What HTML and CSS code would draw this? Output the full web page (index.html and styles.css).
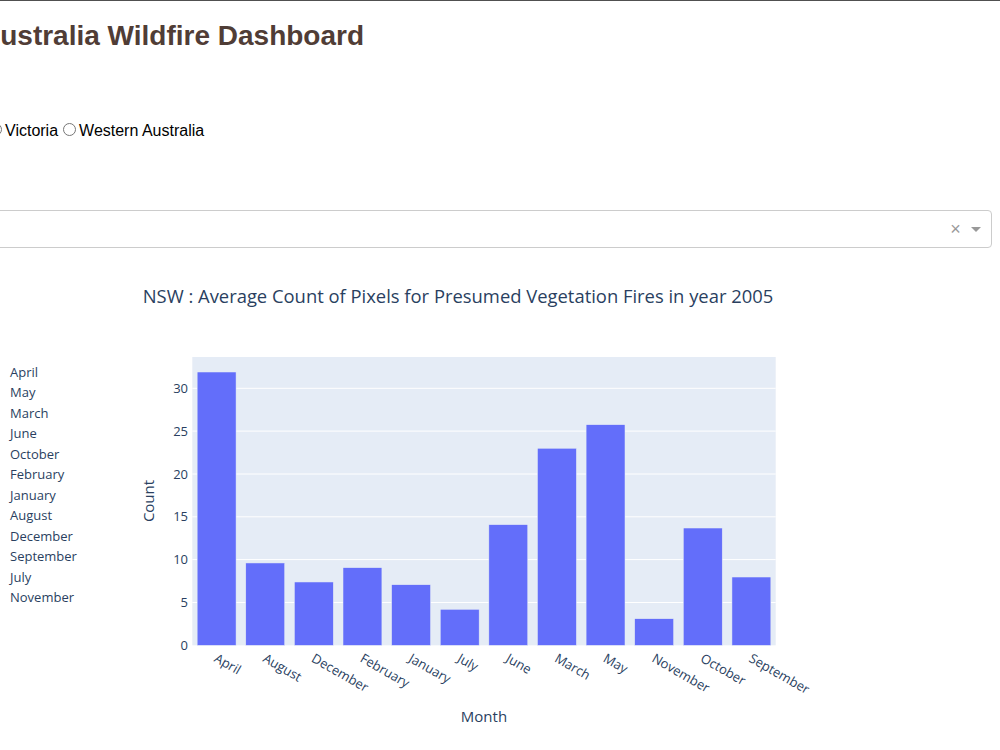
FILE: index.html
```html
<!DOCTYPE html>
<html lang="en">
<head>
    <meta charset="UTF-8">
    <meta name="viewport" content="width=device-width, initial-scale=1.0">
    <title>Australia Wildfire Dashboard</title>
    <link rel="stylesheet" href="styles.css">
</head>
<body>
    <div class="page">
        <h1 class="title">Australia Wildfire Dashboard</h1>

        <div class="region-row">
            <label class="radio-item"><input type="radio" name="region" value="VI">Victoria</label><label class="radio-item"><input type="radio" name="region" value="WA">Western Australia</label>
        </div>

        <div class="select-control">
            <div class="select-value"></div>
            <span class="select-clear">&times;</span>
            <span class="select-arrow-zone"><span class="select-arrow"></span></span>
        </div>

        <div class="plots">
            <ul class="pie-legend">
                <li>April</li>
                <li>May</li>
                <li>March</li>
                <li>June</li>
                <li>October</li>
                <li>February</li>
                <li>January</li>
                <li>August</li>
                <li>December</li>
                <li>September</li>
                <li>July</li>
                <li>November</li>
            </ul>

            <svg class="bar-chart" width="870" height="503" viewBox="130 247 870 503">
                <text class="chart-title" x="458" y="302" text-anchor="middle">NSW : Average Count of Pixels for Presumed Vegetation Fires in year 2005</text>

                <rect x="192.3" y="356" width="583.4" height="288.3" fill="#e5ecf6"/>
                <g stroke="#fff" stroke-width="1">
                    <line x1="192.3" x2="775.7" y1="601.5" y2="601.5"/>
                    <line x1="192.3" x2="775.7" y1="558.6" y2="558.6"/>
                    <line x1="192.3" x2="775.7" y1="515.8" y2="515.8"/>
                    <line x1="192.3" x2="775.7" y1="473" y2="473"/>
                    <line x1="192.3" x2="775.7" y1="430.1" y2="430.1"/>
                    <line x1="192.3" x2="775.7" y1="387.3" y2="387.3"/>
                </g>

                <g id="bars" fill="#636efa" stroke="#e5ecf6" stroke-width="0.5"></g>

                <g class="tick" text-anchor="end">
                    <text x="188" y="648.8">0</text>
                    <text x="188" y="606">5</text>
                    <text x="188" y="563.1">10</text>
                    <text x="188" y="520.3">15</text>
                    <text x="188" y="477.5">20</text>
                    <text x="188" y="434.6">25</text>
                    <text x="188" y="391.8">30</text>
                </g>

                <g id="xticks" class="tick"></g>

                <text class="axis-title" transform="translate(154,500) rotate(-90)" text-anchor="middle">Count</text>
                <text class="axis-title" x="484" y="721" text-anchor="middle">Month</text>
            </svg>
        </div>
    </div>

    <script>
        const data = [
            ['April', 31.9], ['August', 9.61], ['December', 7.39], ['February', 9.06],
            ['January', 7.07], ['July', 4.2], ['June', 14.08], ['March', 23.0],
            ['May', 25.75], ['November', 3.1], ['October', 13.69], ['September', 7.97]
        ];
        const ns = 'http://www.w3.org/2000/svg';
        const left = 192.3, base = 644.3, perUnit = 8.567;
        const step = 583.4 / data.length;
        const bars = document.getElementById('bars');
        const xticks = document.getElementById('xticks');

        data.forEach(([month, value], i) => {
            const h = value * perUnit;
            const rect = document.createElementNS(ns, 'rect');
            rect.setAttribute('x', left + step * i + step * 0.1);
            rect.setAttribute('y', base - h);
            rect.setAttribute('width', step * 0.8);
            rect.setAttribute('height', h);
            bars.appendChild(rect);

            const cx = left + step * (i + 0.5);
            const label = document.createElementNS(ns, 'text');
            label.setAttribute('transform', `translate(${cx - 1},656) rotate(30)`);
            label.setAttribute('dy', '0.35em');
            label.textContent = month;
            xticks.appendChild(label);
        });
    </script>
</body>
</html>
```

FILE: styles.css
```css
html, body {
    margin: 0;
    padding: 0;
}
body {
    border-top: 1px solid #505050;
    background-color: #fff;
    font-family: Arial, "Liberation Sans", sans-serif;
    overflow: hidden;
}
.page {
    width: 1000px;
    height: 749px;
    overflow: hidden;
}
.title {
    margin: 0.67em 0 0 -20px;
    font-size: 28px;
    font-weight: bold;
    color: #503D36;
}
.region-row {
    margin-top: 68px;
    margin-left: -16px;
    font-size: 16px;
    color: #000;
}
.radio-item {
    display: inline-block;
}
.radio-item input {
    margin: 3px 3px 0 5px;
}
.select-control {
    display: flex;
    align-items: center;
    height: 36px;
    margin: 70px 8px 0 -20px;
    border: 1px solid #ccc;
    border-radius: 4px;
    background-color: #fff;
}
.select-value {
    flex: 1;
}
.select-clear {
    width: 17px;
    padding-right: 2px;
    text-align: center;
    font-size: 18px;
    line-height: 1;
    color: #999;
}
.select-arrow-zone {
    display: flex;
    justify-content: center;
    width: 20px;
    padding-right: 5px;
}
.select-arrow {
    width: 0;
    height: 0;
    border-style: solid;
    border-width: 5px 5px 2.5px;
    border-color: #999 transparent transparent;
    margin-top: 3px;
}
.plots {
    display: flex;
}
.pie-legend {
    width: 120px;
    margin: 0;
    padding: 114px 0 0 10px;
    list-style: none;
    font-family: "Open Sans", verdana, arial, sans-serif;
    font-size: 13px;
    line-height: 20.5px;
    color: #2a3f5f;
}
.bar-chart {
    display: block;
    font-family: "Open Sans", verdana, arial, sans-serif;
    fill: #2a3f5f;
}
.chart-title {
    font-size: 18.4px;
}
.tick {
    font-size: 13px;
}
.axis-title {
    font-size: 15px;
}
```
